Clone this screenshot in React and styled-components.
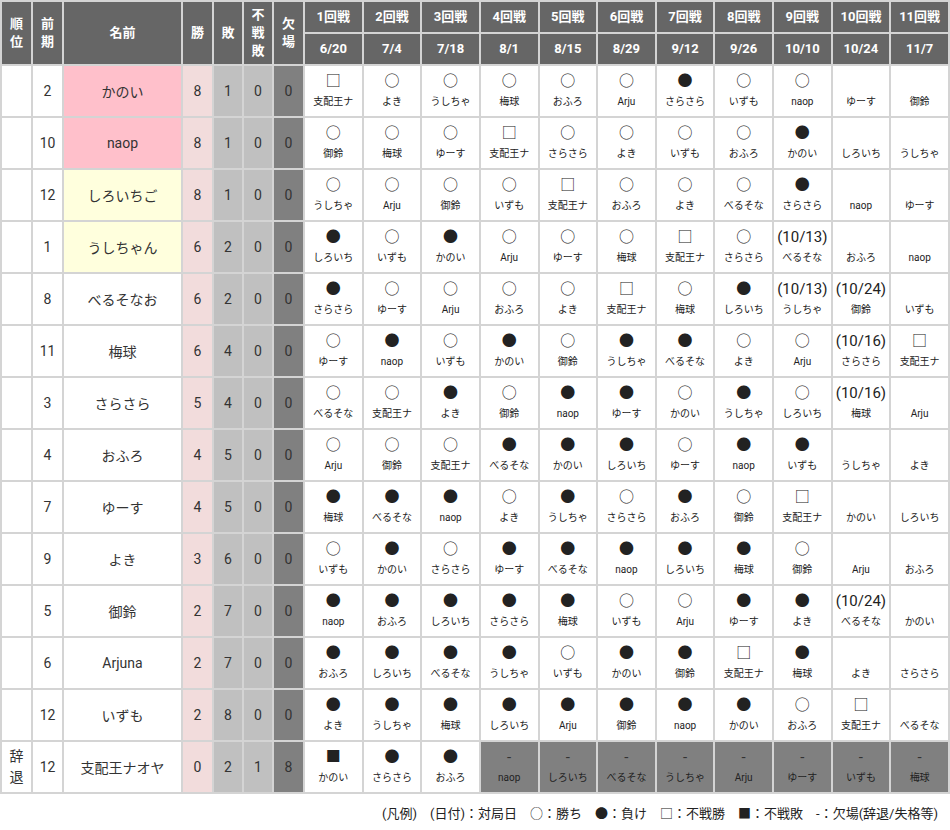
import React from "react";
import styled, { createGlobalStyle } from "styled-components";

const Global = createGlobalStyle`
  body { margin: 0; background: #fff; font-family: Roboto, "Noto Sans CJK JP", sans-serif; color: #222; }
`;

const ROUNDS = [
  ["1回戦", "6/20"], ["2回戦", "7/4"], ["3回戦", "7/18"], ["4回戦", "8/1"],
  ["5回戦", "8/15"], ["6回戦", "8/29"], ["7回戦", "9/12"], ["8回戦", "9/26"],
  ["9回戦", "10/10"], ["10回戦", "10/24"], ["11回戦", "11/7"],
];

const p = (s) => s.split(" ").map((t) => {
  const m = t.match(/^(\(\d+\/\d+\)|[○●□■\-_])(.*)$/);
  return { mark: m[1] === "_" ? "" : m[1], opp: m[2] };
});

const ROWS = [
  { rank: "", prev: 2, name: "かのい", bg: "#ffc0cb", w: 8, l: 1, f: 0, a: 0, games: p("□支配王ナ ○よき ○うしちゃ ○梅球 ○おふろ ○Arju ●さらさら ○いずも ○naop _ゆーす _御鈴") },
  { rank: "", prev: 10, name: "naop", bg: "#ffc0cb", w: 8, l: 1, f: 0, a: 0, games: p("○御鈴 ○梅球 ○ゆーす □支配王ナ ○さらさら ○よき ○いずも ○おふろ ●かのい _しろいち _うしちゃ") },
  { rank: "", prev: 12, name: "しろいちご", bg: "#ffffdd", w: 8, l: 1, f: 0, a: 0, games: p("○うしちゃ ○Arju ○御鈴 ○いずも □支配王ナ ○おふろ ○よき ○べるそな ●さらさら _naop _ゆーす") },
  { rank: "", prev: 1, name: "うしちゃん", bg: "#ffffdd", w: 6, l: 2, f: 0, a: 0, games: p("●しろいち ○いずも ●かのい ○Arju ○ゆーす ○梅球 □支配王ナ ○さらさら (10/13)べるそな _おふろ _naop") },
  { rank: "", prev: 8, name: "べるそなお", w: 6, l: 2, f: 0, a: 0, games: p("●さらさら ○ゆーす ○Arju ○おふろ ○よき □支配王ナ ○梅球 ●しろいち (10/13)うしちゃ (10/24)御鈴 _いずも") },
  { rank: "", prev: 11, name: "梅球", w: 6, l: 4, f: 0, a: 0, games: p("○ゆーす ●naop ○いずも ●かのい ○御鈴 ●うしちゃ ●べるそな ○よき ○Arju (10/16)さらさら □支配王ナ") },
  { rank: "", prev: 3, name: "さらさら", w: 5, l: 4, f: 0, a: 0, games: p("○べるそな ○支配王ナ ●よき ○御鈴 ●naop ●ゆーす ○かのい ●うしちゃ ○しろいち (10/16)梅球 _Arju") },
  { rank: "", prev: 4, name: "おふろ", w: 4, l: 5, f: 0, a: 0, games: p("○Arju ○御鈴 ○支配王ナ ●べるそな ●かのい ●しろいち ○ゆーす ●naop ●いずも _うしちゃ _よき") },
  { rank: "", prev: 7, name: "ゆーす", w: 4, l: 5, f: 0, a: 0, games: p("●梅球 ●べるそな ●naop ○よき ●うしちゃ ○さらさら ●おふろ ○御鈴 □支配王ナ _かのい _しろいち") },
  { rank: "", prev: 9, name: "よき", w: 3, l: 6, f: 0, a: 0, games: p("○いずも ●かのい ○さらさら ●ゆーす ●べるそな ●naop ●しろいち ●梅球 ○御鈴 _Arju _おふろ") },
  { rank: "", prev: 5, name: "御鈴", w: 2, l: 7, f: 0, a: 0, games: p("●naop ●おふろ ●しろいち ●さらさら ●梅球 ○いずも ○Arju ●ゆーす ●よき (10/24)べるそな _かのい") },
  { rank: "", prev: 6, name: "Arjuna", w: 2, l: 7, f: 0, a: 0, games: p("●おふろ ●しろいち ●べるそな ●うしちゃ ○いずも ●かのい ●御鈴 □支配王ナ ●梅球 _よき _さらさら") },
  { rank: "", prev: 12, name: "いずも", w: 2, l: 8, f: 0, a: 0, games: p("●よき ●うしちゃ ●梅球 ●しろいち ●Arju ●御鈴 ●naop ●かのい ○おふろ □支配王ナ _べるそな") },
  { rank: "辞退", prev: 12, name: "支配王ナオヤ", w: 0, l: 2, f: 1, a: 8, games: p("■かのい ●さらさら ●おふろ -naop -しろいち -べるそな -うしちゃ -Arju -ゆーす -いずも -梅球") },
];

const Table = styled.table`
  width: 950px;
  border-collapse: collapse;
  table-layout: fixed;
  border: 2px solid #d4d4d4;
`;

const Th = styled.th`
  background: #666;
  color: #fff;
  font-size: 13px;
  font-weight: 700;
  border: 2px solid #d4d4d4;
  height: 30px;
  padding: 0;
  line-height: 1.4;
`;

const Td = styled.td`
  border: 2px solid #d4d4d4;
  background: ${(p) => p.$bg || "#fff"};
  text-align: center;
  font-size: 14px;
  height: 50px;
  padding: 0;
  color: #333;
`;

const Mark = styled.div`
  font-size: 15px;
  line-height: 18px;
  height: 18px;
  color: ${(p) => (p.$dash ? "#333" : "#222")};
`;

const Opp = styled.div`
  font-size: 10px;
  line-height: 16px;
  margin-top: 4px;
  color: #222;
`;

const Legend = styled.div`
  text-align: right;
  font-size: 13px;
  padding: 9px 12px 0 0;
  color: #222;
  word-spacing: 2px;
`;

const Stack = ({ t }) => t.split("").map((c, i) => <div key={i}>{c}</div>);

export default function App() {
  return (
    <>
      <Global />
      <Table>
        <colgroup>
          <col style={{ width: 31 }} />
          <col style={{ width: 31 }} />
          <col style={{ width: 119 }} />
          <col style={{ width: 31 }} />
          <col style={{ width: 30 }} />
          <col style={{ width: 30 }} />
          <col style={{ width: 31 }} />
          {ROUNDS.map((r) => <col key={r[0]} />)}
        </colgroup>
        <thead>
          <tr>
            <Th rowSpan={2}><Stack t="順位" /></Th>
            <Th rowSpan={2}><Stack t="前期" /></Th>
            <Th rowSpan={2}>名前</Th>
            <Th rowSpan={2}>勝</Th>
            <Th rowSpan={2}>敗</Th>
            <Th rowSpan={2}><Stack t="不戦敗" /></Th>
            <Th rowSpan={2}><Stack t="欠場" /></Th>
            {ROUNDS.map((r) => <Th key={r[0]}>{r[0]}</Th>)}
          </tr>
          <tr>
            {ROUNDS.map((r) => <Th key={r[1]}>{r[1]}</Th>)}
          </tr>
        </thead>
        <tbody>
          {ROWS.map((row, i) => (
            <tr key={i}>
              <Td style={{ lineHeight: "1.5" }}>{row.rank && <Stack t={row.rank} />}</Td>
              <Td>{row.prev}</Td>
              <Td $bg={row.bg}>{row.name}</Td>
              <Td $bg="#f2dcdc">{row.w}</Td>
              <Td $bg="#c0c0c0">{row.l}</Td>
              <Td $bg="#c0c0c0">{row.f}</Td>
              <Td $bg="#808080">{row.a}</Td>
              {row.games.map((g, j) => (
                <Td key={j} $bg={g.mark === "-" ? "#808080" : undefined}>
                  <Mark $dash={g.mark === "-"}>{g.mark}</Mark>
                  <Opp>{g.opp}</Opp>
                </Td>
              ))}
            </tr>
          ))}
        </tbody>
      </Table>
      <Legend>
        (凡例)　(日付)：対局日　○：勝ち　●：負け　□：不戦勝　■：不戦敗　-：欠場(辞退/失格等)
      </Legend>
    </>
  );
}
